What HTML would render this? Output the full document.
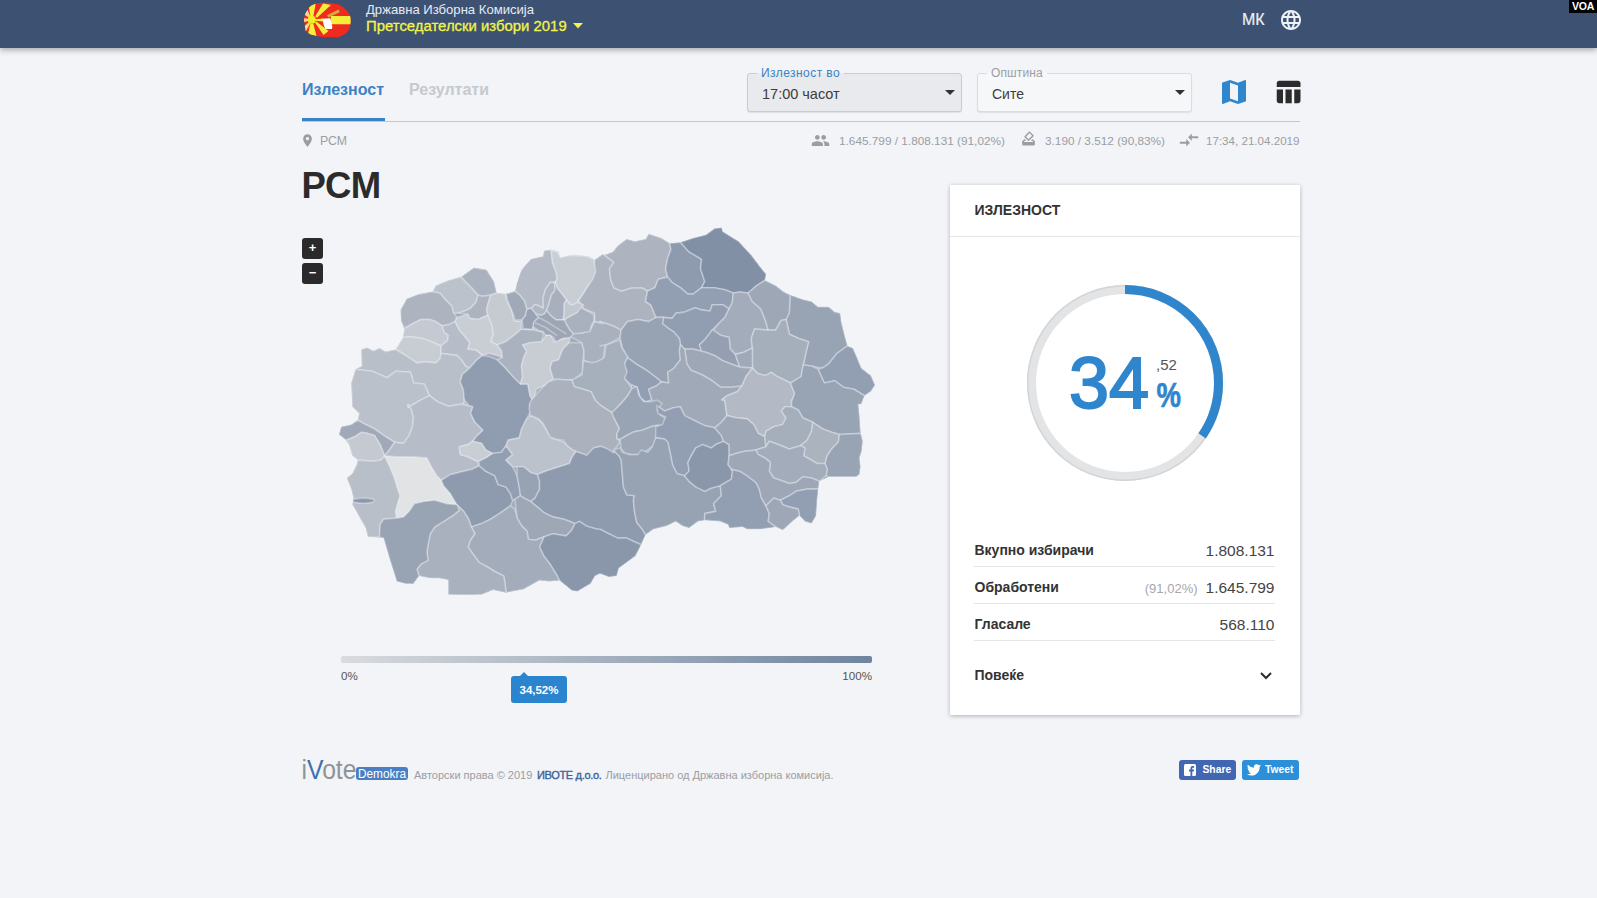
<!DOCTYPE html>
<html lang="mk">
<head>
<meta charset="utf-8">
<title>Државна Изборна Комисија</title>
<style>
*{box-sizing:border-box;margin:0;padding:0}
html,body{width:1597px;height:898px;overflow:hidden}
body{background:#f2f4f7;font-family:"Liberation Sans",sans-serif;color:#2b2b2b;position:relative}
.abs{position:absolute;white-space:nowrap}
#hdr{position:absolute;left:0;top:0;width:1597px;height:48px;background:#3d5273;box-shadow:0 2px 6px rgba(0,0,0,.32)}
#voa{position:absolute;right:0;top:0;width:28px;height:12.5px;background:#000;color:#fff;font-weight:bold;font-size:10.5px;line-height:12.5px;text-align:center;letter-spacing:-.2px}
.t1{left:366px;top:1.5px;color:#e6ebf2;font-size:13.1px;line-height:16px}
.t2{left:366px;top:17px;color:#f2f24a;font-size:14.9px;line-height:18px;-webkit-text-stroke:.3px #f2f24a}
.mk{left:1242px;top:10.8px;color:#eef1f6;font-size:16px;line-height:18px;-webkit-text-stroke:.2px #eef1f6}
.tab1{left:302px;top:81px;color:#3b82c4;font-weight:bold;font-size:16px;line-height:18px}
.tab2{left:409px;top:81px;color:#c5c9ce;font-weight:bold;font-size:16px;line-height:18px}
#tabline{position:absolute;left:302px;top:121px;width:998px;height:1px;background:#c4c8cc}
#tabul{position:absolute;left:302px;top:118px;width:83px;height:3px;background:#3b82c4}
.sel{position:absolute;top:73px;width:215px;height:38.5px;border:1px solid #c9ccd0;border-radius:3px;box-shadow:0 1px 1px rgba(0,0,0,.08)}
.sel .lab{position:absolute;left:9px;top:-8px;padding:0 4px;font-size:12px;line-height:14px;white-space:nowrap}
.sel .val{position:absolute;left:14px;top:11px;font-size:14.5px;line-height:18px;color:#3c3c3c;white-space:nowrap}
.sel .car{position:absolute;right:6px;top:16px;width:0;height:0;border-left:5px solid transparent;border-right:5px solid transparent;border-top:5px solid #333}
.info{font-size:11.8px;line-height:14px;color:#9a9ea3;top:133.5px}
h1.abs{left:301.5px;top:166px;font-size:36.5px;line-height:40px;font-weight:bold;color:#2b2b2b}
.zb{position:absolute;left:302px;width:21px;height:21px;background:#2a2a2a;border-radius:3px;color:#fff;font-weight:bold;font-size:13px;line-height:20px;text-align:center}
#bar{position:absolute;left:341px;top:656px;width:531px;height:7px;border-radius:2px;background:linear-gradient(90deg,#d9dbde,#6f849e)}
.bl{font-size:11.6px;line-height:14px;color:#555;top:669px}
#tip{position:absolute;left:511px;top:676px;width:56px;height:27px;background:#2a84ce;border-radius:3px;color:#fff;font-size:11.5px;font-weight:bold;line-height:28px;text-align:center}
#tip:before{content:"";position:absolute;left:9px;top:-4px;border-left:4px solid transparent;border-right:4px solid transparent;border-bottom:4px solid #2a84ce}
#card{position:absolute;left:950px;top:185px;width:350px;height:530px;background:#fff;box-shadow:0 1px 4px rgba(0,0,0,.28);border-radius:1px}
#card .h{position:absolute;left:24.5px;top:15.5px;font-size:14px;line-height:18px;font-weight:bold;color:#333}
#card .hs{position:absolute;left:0;top:51px;width:350px;height:1px;background:#e4e6e9}
.row{position:absolute;left:24px;width:301px;height:37px;border-bottom:1px solid #e3e5e8}
.row b{position:absolute;left:.5px;top:12px;font-size:14px;line-height:16px;color:#333;white-space:nowrap}
.row span{position:absolute;right:.5px;top:12px;font-size:15.5px;line-height:18px;color:#444;white-space:nowrap}
.row i{font-style:normal;font-size:13px;color:#a5a8ac;margin-right:8px}
.ft{font-size:11px;line-height:13px;color:#9a9ea3;top:769px}
.sb{position:absolute;top:760px;height:19.5px;width:57.5px;border-radius:3px;color:#fff;font-weight:bold;font-size:10.3px;line-height:19.5px;white-space:nowrap}
</style>
</head>
<body>
<div id="hdr">
  <svg class="abs" style="left:300px;top:0" width="56" height="44" viewBox="0 0 56 44">
<defs><clipPath id="lg"><path d="M4 20C4 16 5.500 12 9 7.500 12 4.500 16 3.200 21 2.800 27 2.600 33 3 39 4.500 44 7 47.500 11 50 15 51 19 51 24 49.500 29 47 33 42 36.500 37 37.500 31 36.500 26 37.500 20 36.800 14 35.500 8.500 34.500 5.500 30.500 4 25Z"/></clipPath></defs>
<g clip-path="url(#lg)"><rect width="56" height="44" fill="#ef2a1e"/>
<g fill="#f6ee3a"><path d="M10.500 17 13.200 17 15.800 3 8.300 4Z"/><path d="M15.300 16.200 17 17.800 31 5 23 3.500Z"/><path d="M15 19.200 15 20.800 23 21.600 23 18.400Z"/><path d="M31 16 52 16 52 24.200 31 24.200Z"/><path d="M15 22.600 16.400 21.600 28.500 31 23.500 35Z"/><path d="M10.400 23.500 13.300 23.500 16.500 36 7.800 35Z"/></g>
<g fill="#f8d98a"><path d="M9 22 10.200 23.600 5.500 32 3 27.500Z"/><path d="M8.200 18.800 8.200 21 3 22.500 3 18Z"/><path d="M9 17.600 10.300 16.200 7.500 10 4 14.500Z"/></g>
<circle cx="11.800" cy="19.800" r="4" fill="#f3ef1f"/>
<path d="M27 15.300 38.500 9.500 39.800 12.200 28.500 17.600Z" fill="#cfcb3c" opacity=".8"/>
<path d="M22.300 18.700 30.300 18.200 32.400 26.700 31.900 28.900 25.500 29.100 23.900 25.700Z" fill="#fff"/></g></svg>
  <div class="abs t1">Државна Изборна Комисија</div>
  <div class="abs t2">Претседателски избори 2019</div>
  <svg class="abs" style="left:573px;top:23px" width="10" height="6"><path d="M0 0h10L5 5.5z" fill="#f2f24a"/></svg>
  <div class="abs mk">МК</div>
  <svg class="abs" style="left:1279px;top:7.5px" width="24" height="24" viewBox="0 0 24 24"><path fill="#eef1f6" d="M11.99 2C6.47 2 2 6.48 2 12s4.47 10 9.99 10C17.52 22 22 17.52 22 12S17.52 2 11.99 2zm6.93 6h-2.95c-.32-1.25-.78-2.45-1.38-3.56 1.84.63 3.37 1.91 4.33 3.56zM12 4.04c.83 1.2 1.48 2.53 1.91 3.96h-3.82c.43-1.43 1.08-2.76 1.91-3.96zM4.26 14C4.1 13.36 4 12.69 4 12s.1-1.36.26-2h3.38c-.08.66-.14 1.32-.14 2 0 .68.06 1.34.14 2H4.26zm.82 2h2.95c.32 1.25.78 2.45 1.38 3.56-1.84-.63-3.37-1.9-4.33-3.56zm2.95-8H5.08c.96-1.66 2.49-2.93 4.33-3.56C8.81 5.55 8.35 6.750 8.030 8zM12 19.96c-.83-1.2-1.48-2.53-1.91-3.96h3.82c-.43 1.43-1.08 2.76-1.91 3.96zM14.34 14H9.66c-.09-.66-.16-1.32-.16-2 0-.68.07-1.35.16-2h4.68c.09.65.16 1.32.16 2 0 .68-.07 1.34-.16 2zm.25 5.56c.6-1.11 1.06-2.31 1.38-3.56h2.95c-.96 1.65-2.49 2.93-4.33 3.56zM16.36 14c.08-.66.14-1.32.14-2 0-.68-.06-1.34-.14-2h3.38c.16.64.26 1.31.26 2s-.1 1.36-.26 2h-3.38z"/></svg>
</div>
<div id="voa">VOA</div>

<div class="abs tab1">Излезност</div>
<div class="abs tab2">Резултати</div>
<div id="tabline"></div><div id="tabul"></div>

<div class="sel" style="left:747px;background:#e8eaed">
  <div class="lab" style="letter-spacing:.43px;color:#3b82c4;background:linear-gradient(#f2f4f7 50%,#e8eaed 50%)">Излезност во</div>
  <div class="val">17:00 часот</div><div class="car"></div>
</div>
<div class="sel" style="left:977px;background:#f6f7f9;border-color:#d9dce0">
  <div class="lab" style="letter-spacing:.13px;color:#9a9ea3;background:linear-gradient(#f2f4f7 50%,#f7f8fa 50%)">Општина</div>
  <div class="val" style="font-size:14px">Сите</div><div class="car"></div>
</div>
<svg class="abs" style="left:1218px;top:76px" width="32" height="32" viewBox="0 0 24 24"><path fill="#2f86cd" d="M20.500 3l-.16.030L15 5.100 9 3 3.360 4.900c-.21.070-.36.250-.36.480V20.500c0 .28.220.5.500.5l.16-.030L9 18.900l6 2.100 5.640-1.900c.21-.070.36-.250.36-.480V3.500c0-.28-.22-.5-.5-.5zM15 19l-6-2.110V5l6 2.110V19z"/></svg>
<svg class="abs" style="left:1273px;top:77px" width="30" height="30" viewBox="0 0 24 24"><path fill="#2b2b2b" d="M10 10.020h5V21h-5zM17 21h3c1.100 0 2-.9 2-2v-9h-5v11zm3-18H5c-1.100 0-2 .9-2 2v3h19V5c0-1.100-.9-2-2-2zM3 19c0 1.100.9 2 2 2h3V10H3v9z"/></svg>
<svg class="abs" style="left:299.5px;top:132.5px" width="15" height="15" viewBox="0 0 24 24"><path fill="#9a9ea3" d="M12 2C8.130 2 5 5.130 5 9c0 5.250 7 13 7 13s7-7.750 7-13c0-3.870-3.130-7-7-7zm0 9.500c-1.380 0-2.500-1.120-2.500-2.500s1.120-2.500 2.500-2.500 2.500 1.120 2.500 2.500-1.120 2.500-2.500 2.500z"/></svg>
<svg class="abs" style="left:811px;top:131px" width="19" height="19" viewBox="0 0 24 24"><path fill="#9a9ea3" d="M16 11c1.660 0 2.990-1.340 2.990-3S17.660 5 16 5c-1.660 0-3 1.340-3 3s1.340 3 3 3zm-8 0c1.660 0 2.990-1.340 2.990-3S9.660 5 8 5C6.340 5 5 6.340 5 8s1.340 3 3 3zm0 2c-2.330 0-7 1.170-7 3.500V19h14v-2.500c0-2.330-4.670-3.500-7-3.500zm8 0c-.29 0-.62.020-.97.050 1.160.84 1.970 1.970 1.970 3.450V19h6v-2.500c0-2.330-4.670-3.500-7-3.500z"/></svg>
<svg class="abs" style="left:1020px;top:130px" width="17" height="17" viewBox="0 0 24 24"><path fill="#9a9ea3" d="M18 13h-.68l-2 2h1.910L19 17H5l1.780-2h2.050l-2-2H6l-3 3v4c0 1.100.89 2 1.990 2H19c1.100 0 2-.89 2-2v-4l-3-3zm-1-5.050l-4.950 4.950-3.540-3.540 4.950-4.950L17 7.950zm-4.240-5.660L6.390 8.660c-.39.390-.39 1.020 0 1.410l4.950 4.950c.39.390 1.020.39 1.410 0l6.360-6.360c.39-.39.39-1.020 0-1.410L14.160 2.300c-.38-.4-1.010-.4-1.400-.010z"/></svg>
<svg class="abs" style="left:1178px;top:129px" width="22" height="22" viewBox="0 0 24 24"><path fill="#9a9ea3" d="M9.010 14H2v2h7.010v3L13 15l-3.990-4v3zm5.980-1v-3H22V8h-7.010V5L11 9l3.990 4z"/></svg>

<div class="abs info" style="left:320px;font-size:12.3px">РСМ</div>
<div class="abs info" style="left:839px">1.645.799 / 1.808.131 (91,02%)</div>
<div class="abs info" style="left:1045px">3.190 / 3.512 (90,83%)</div>
<div class="abs info" style="left:1206px;font-size:11.6px">17:34, 21.04.2019</div>

<h1 class="abs">РСМ</h1>
<div class="zb" style="top:238px">+</div>
<div class="zb" style="top:263px">−</div>

<svg class="abs" style="left:330px;top:215px" width="560" height="395" viewBox="0 0 560 395"><defs><clipPath id="mk"><path d="M21.2 168.0L25.4 154.2L31.7 151.0L31.3 134.5L37.0 132.4L43.4 135.8L49.7 133.0L55.4 136.6L65.6 134.5L73.0 122.5L74.1 114.0L70.9 105.5L70.5 94.9L76.6 83.7L88.9 79.1L102.6 76.5L105.8 70.6L118.5 65.3L131.2 61.7L143.9 52.6L156.6 54.7L164.0 66.4L166.8 78.0L175.7 78.7L185.2 75.9L187.3 67.4L191.5 54.7L201.1 44.2L212.7 41.4L214.2 35.7L221.2 34.6L228.6 36.7L230.3 43.1L241.3 39.9L258.2 41.0L264.6 44.8L273.0 38.9L274.2 39.9L282.7 36.7L288.0 30.4L296.5 24.0L304.9 26.2L315.5 24.0L318.7 18.8L331.4 23.0L339.8 28.3L350.4 27.2L363.1 23.0L375.8 19.8L384.3 13.5L391.7 12.4L392.8 16.6L408.6 26.2L421.3 39.9L430.8 52.6L436.1 59.0L435.1 65.3L445.7 70.6L454.1 77.0L460.5 80.1L473.2 84.4L481.6 86.5L488.0 91.8L498.6 91.8L504.9 97.1L510.2 98.1L511.3 106.6L514.4 119.3L517.6 130.9L522.9 133.0L527.1 142.6L531.4 153.1L540.9 160.6L545.1 170.1L540.9 176.4L534.6 180.7L531.4 189.1L528.4 189.5L529.5 200.6L530.6 216.2L532.8 226.2L531.7 236.2L529.5 242.9L530.6 251.8L529.5 259.6L526.2 261.8L499.4 261.8L489.4 266.3L488.3 274.1L487.2 285.2L486.1 300.8L481.6 308.6L474.9 306.4L469.4 300.8L463.8 305.3L452.7 315.3L446.0 312.0L430.4 314.2L417.0 314.2L412.6 312.0L399.2 313.1L398.1 309.7L390.3 306.4L374.7 305.3L368.0 306.4L359.1 313.1L352.4 310.9L345.7 306.4L336.8 310.9L323.5 314.2L315.7 319.8L311.2 329.8L305.6 340.9L296.7 347.6L288.9 353.2L286.7 361.0L278.9 362.1L270.0 358.7L265.1 361.0L260.6 368.8L247.3 376.6L241.7 375.5L229.4 365.4L219.4 366.5L209.4 365.4L193.8 374.3L176.0 377.7L163.1 375.0L151.9 379.5L135.9 379.9L118.3 379.5L118.3 365.0L109.1 363.2L100.2 363.2L89.1 361.0L83.5 368.8L75.7 368.8L66.8 366.5L60.1 345.4L53.5 323.1L37.9 322.0L35.6 313.1L31.2 305.3L25.6 295.3L22.3 289.7L23.4 283.0L21.2 274.1L16.7 263.0L22.3 258.5L26.7 249.6L27.8 245.1L22.3 240.7L18.9 229.6L14.5 224.0L8.9 219.5L11.1 211.7L21.2 209.5L27.8 205.0L29.0 198.4L22.3 191.7Z"/></clipPath></defs><g clip-path="url(#mk)" stroke="#f4f7fb" stroke-opacity=".36" stroke-width="1.6" stroke-linejoin="round"><path d="M21.2 168.0L25.4 154.2L31.7 151.0L31.3 134.5L37.0 132.4L43.4 135.8L49.7 133.0L55.4 136.6L65.6 134.5L73.0 122.5L74.1 114.0L70.9 105.5L70.5 94.9L76.6 83.7L88.9 79.1L102.6 76.5L105.8 70.6L118.5 65.3L131.2 61.7L143.9 52.6L156.6 54.7L164.0 66.4L166.8 78.0L175.7 78.7L185.2 75.9L187.3 67.4L191.5 54.7L201.1 44.2L212.7 41.4L214.2 35.7L221.2 34.6L228.6 36.7L230.3 43.1L241.3 39.9L258.2 41.0L264.6 44.8L273.0 38.9L274.2 39.9L282.7 36.7L288.0 30.4L296.5 24.0L304.9 26.2L315.5 24.0L318.7 18.8L331.4 23.0L339.8 28.3L350.4 27.2L363.1 23.0L375.8 19.8L384.3 13.5L391.7 12.4L392.8 16.6L408.6 26.2L421.3 39.9L430.8 52.6L436.1 59.0L435.1 65.3L445.7 70.6L454.1 77.0L460.5 80.1L473.2 84.4L481.6 86.5L488.0 91.8L498.6 91.8L504.9 97.1L510.2 98.1L511.3 106.6L514.4 119.3L517.6 130.9L522.9 133.0L527.1 142.6L531.4 153.1L540.9 160.6L545.1 170.1L540.9 176.4L534.6 180.7L531.4 189.1L528.4 189.5L529.5 200.6L530.6 216.2L532.8 226.2L531.7 236.2L529.5 242.9L530.6 251.8L529.5 259.6L526.2 261.8L499.4 261.8L489.4 266.3L488.3 274.1L487.2 285.2L486.1 300.8L481.6 308.6L474.9 306.4L469.4 300.8L463.8 305.3L452.7 315.3L446.0 312.0L430.4 314.2L417.0 314.2L412.6 312.0L399.2 313.1L398.1 309.7L390.3 306.4L374.7 305.3L368.0 306.4L359.1 313.1L352.4 310.9L345.7 306.4L336.8 310.9L323.5 314.2L315.7 319.8L311.2 329.8L305.6 340.9L296.7 347.6L288.9 353.2L286.7 361.0L278.9 362.1L270.0 358.7L265.1 361.0L260.6 368.8L247.3 376.6L241.7 375.5L229.4 365.4L219.4 366.5L209.4 365.4L193.8 374.3L176.0 377.7L163.1 375.0L151.9 379.5L135.9 379.9L118.3 379.5L118.3 365.0L109.1 363.2L100.2 363.2L89.1 361.0L83.5 368.8L75.7 368.8L66.8 366.5L60.1 345.4L53.5 323.1L37.9 322.0L35.6 313.1L31.2 305.3L25.6 295.3L22.3 289.7L23.4 283.0L21.2 274.1L16.7 263.0L22.3 258.5L26.7 249.6L27.8 245.1L22.3 240.7L18.9 229.6L14.5 224.0L8.9 219.5L11.1 211.7L21.2 209.5L27.8 205.0L29.0 198.4L22.3 191.7Z" fill="#a3acba" stroke="none"/><path d="M76.6 83.7L88.9 79.1L102.6 76.5L110.1 78.0L115.3 84.4L121.7 90.7L123.8 98.1L127.0 102.4L124.9 106.6L118.5 109.8L112.2 110.8L105.8 106.6L99.5 104.5L91.0 104.5L82.5 108.7L74.1 112.9L70.9 105.5L70.5 94.9Z" fill="#adb4c0"/><path d="M102.6 76.5L105.8 70.6L118.5 65.3L131.2 61.7L135.4 66.4L141.8 72.7L148.1 80.1L146.0 87.5L139.7 93.9L129.1 98.1L123.8 98.1L121.7 90.7L115.3 84.4L110.1 78.0Z" fill="#bcc2cc"/><path d="M131.2 61.7L143.9 52.6L156.6 54.7L164.0 66.4L166.8 78.0L160.8 80.1L152.4 81.2L148.1 80.1L141.8 72.7L135.4 66.4Z" fill="#aab2bf"/><path d="M148.1 80.1L152.4 81.2L160.8 80.1L158.7 86.5L156.6 93.9L157.7 100.2L148.1 104.5L139.7 103.4L137.6 99.2L129.1 98.1L139.7 93.9L146.0 87.5Z" fill="#adb4c0"/><path d="M160.8 80.1L166.8 78.0L175.7 78.7L176.7 85.4L182.0 96.0L184.1 105.5L191.5 106.6L191.5 114.0L184.1 120.3L175.7 126.7L167.2 129.9L160.8 126.7L163.0 119.3L161.9 110.8L157.7 100.2L156.6 93.9L158.7 86.5Z" fill="#c6cbd2"/><path d="M127.0 102.4L137.6 99.2L139.7 103.4L148.1 104.5L157.7 100.2L161.9 110.8L163.0 119.3L160.8 126.7L167.2 129.9L171.4 135.2L172.5 142.6L167.2 140.4L158.7 138.3L152.4 140.4L146.0 135.2L137.6 134.1L139.7 127.8L135.4 122.5L129.1 115.1L125.9 108.7L124.9 106.6Z" fill="#c9ced5"/><path d="M73.0 122.5L74.1 114.0L82.5 108.7L91.0 104.5L99.5 104.5L105.8 106.6L112.2 110.8L114.3 117.2L118.5 120.3L117.5 125.6L111.1 130.9L101.6 126.7L91.0 123.1L80.4 121.8Z" fill="#c5cad2"/><path d="M65.6 134.5L73.0 122.5L80.4 121.8L91.0 123.1L101.6 126.7L111.1 130.9L111.1 138.3L110.1 143.6L105.8 147.9L95.2 146.8L86.8 147.9L80.4 143.6L72.0 138.3Z" fill="#c8ccd3"/><path d="M112.2 110.8L118.5 109.8L124.9 106.6L125.9 108.7L129.1 115.1L135.4 122.5L139.7 127.8L137.6 134.1L146.0 135.2L152.4 140.4L146.0 145.7L139.7 153.1L135.4 151.0L131.2 144.7L127.0 140.4L118.5 139.4L111.1 138.3L111.1 130.9L117.5 125.6L118.5 120.3L114.3 117.2Z" fill="#b6bdc8"/><path d="M31.7 151.0L31.3 134.5L37.0 132.4L43.4 135.8L49.7 133.0L55.4 136.6L65.6 134.5L72.0 138.3L80.4 143.6L86.8 147.9L95.2 146.8L105.8 147.9L110.1 143.6L111.1 138.3L118.5 139.4L127.0 140.4L131.2 144.7L135.4 151.0L139.7 153.1L132.3 159.5L130.2 166.9L133.3 174.3L134.4 184.9L139.7 191.2L131.2 189.1L118.5 191.2L107.9 187.0L99.5 180.7L94.2 169.0L83.6 168.0L80.4 157.0L65.6 156.3L57.1 162.7L42.3 156.3L25.4 154.2Z" fill="#b9bfc9"/><path d="M21.2 168.0L25.4 154.2L42.3 156.3L57.1 162.7L65.6 156.3L80.4 157.0L83.6 168.0L94.2 169.0L99.5 180.7L91.0 184.9L78.3 192.3L78.0 189.5L81.3 193.9L83.5 202.8L82.4 211.7L79.1 220.6L73.5 228.4L64.6 227.3L55.7 221.8L44.6 214.0L33.4 208.4L27.8 205.0L29.0 198.4L22.3 191.7Z" fill="#bbc1ca"/><path d="M139.7 153.1L146.0 145.7L152.4 140.4L158.7 141.5L167.2 144.7L175.7 153.1L184.1 162.7L190.5 169.0L197.9 169.0L200.0 180.7L203.2 186.0L199.4 189.5L200.5 196.1L196.0 205.0L191.6 214.0L189.3 222.9L178.2 225.1L176.0 230.7L171.5 237.3L162.6 238.5L155.9 235.1L151.5 228.4L142.6 226.2L145.9 221.8L152.6 215.1L144.8 207.3L140.3 198.4L142.6 191.7L133.7 189.5L134.4 184.9L133.3 174.3L130.2 166.9L132.3 159.5Z" fill="#909cb0"/><path d="M191.5 114.0L203.2 115.1L213.8 117.2L211.6 126.7L200.0 127.8L192.6 129.9L196.8 136.2L193.7 142.6L191.5 151.0L192.6 161.6L190.5 169.0L184.1 162.7L175.7 153.1L167.2 144.7L172.5 142.6L171.4 135.2L167.2 129.9L175.7 126.7L184.1 120.3Z" fill="#aab2bf"/><path d="M192.6 129.9L200.0 127.8L211.6 126.7L215.9 120.3L221.2 120.3L224.3 126.7L232.8 123.5L240.2 121.4L239.2 127.8L232.8 134.1L228.6 144.7L222.2 146.8L220.1 153.1L223.3 163.7L215.9 170.1L206.3 174.3L203.2 186.0L200.0 180.7L197.9 169.0L190.5 169.0L192.6 161.6L191.5 151.0L193.7 142.6L196.8 136.2Z" fill="#c8ccd3"/><path d="M232.8 134.1L239.2 127.8L251.9 127.8L254.0 136.2L252.9 146.8L252.9 157.4L243.4 164.8L232.8 164.8L223.3 163.7L220.1 153.1L222.2 146.8L228.6 144.7Z" fill="#a9b1be"/><path d="M185.2 75.9L187.3 67.4L191.5 54.7L201.1 44.2L212.7 41.4L214.2 35.7L221.2 34.6L222.2 45.2L227.5 55.8L227.5 63.2L220.1 68.5L213.8 77.0L211.6 89.7L203.2 91.8L197.9 93.9L194.7 85.4L188.4 78.0Z" fill="#b4bbc6"/><path d="M221.2 34.6L228.6 36.7L230.3 43.1L241.3 39.9L258.2 41.0L264.6 44.8L263.5 55.8L259.3 68.5L254.0 77.0L248.7 85.4L243.4 92.8L239.2 89.7L232.8 78.0L224.3 68.5L227.5 63.2L227.5 55.8L222.2 45.2Z" fill="#c8cdd4"/><path d="M175.7 78.7L185.2 75.9L188.4 78.0L194.7 85.4L197.9 93.9L195.8 100.2L191.5 106.6L184.1 105.5L182.0 96.0L176.7 85.4Z" fill="#a0a9b8"/><path d="M213.8 77.0L220.1 68.5L224.3 68.5L232.8 78.0L234.9 91.8L232.8 104.5L224.3 106.6L218.0 100.2L211.6 89.7Z" fill="#a3acba"/><path d="M191.5 106.6L195.8 100.2L197.9 93.9L203.2 91.8L211.6 99.2L208.5 104.5L203.2 108.7L204.2 114.0L191.5 114.0Z" fill="#9aa4b4"/><path d="M203.2 108.7L208.5 104.5L211.6 99.2L218.0 100.2L224.3 106.6L232.8 104.5L239.2 110.8L243.4 117.2L240.2 121.4L232.8 123.5L224.3 126.7L221.2 120.3L215.9 120.3L213.8 117.2L204.2 114.0Z" fill="#a0a9b8"/><path d="M234.9 91.8L239.2 89.7L243.4 92.8L252.9 88.6L248.7 85.4L243.4 92.8L234.9 104.5L232.8 104.5Z" fill="#c0c5ce"/><path d="M234.9 104.5L243.4 92.8L252.9 88.6L254.0 93.9L264.6 98.1L264.6 106.6L260.3 115.1L251.9 118.2L243.4 117.2L239.2 110.8Z" fill="#a3acba"/><path d="M264.6 44.8L273.0 38.9L274.2 39.9L278.5 43.1L283.8 47.3L279.5 53.7L280.6 64.3L283.8 72.7L291.2 75.9L301.7 72.7L312.3 72.7L317.6 75.9L315.5 86.5L320.8 89.7L326.1 102.4L318.7 106.6L308.1 104.5L297.5 106.6L291.2 115.1L282.7 110.8L270.0 106.6L273.0 108.7L264.6 106.6L264.6 98.1L254.0 93.9L248.7 85.4L254.0 77.0L259.3 68.5L263.5 55.8Z" fill="#adb4c0"/><path d="M264.6 106.6L273.0 108.7L270.0 106.6L282.7 110.8L291.2 115.1L290.1 122.5L284.8 125.6L276.3 129.9L270.0 130.9L275.1 129.9L273.0 144.7L262.4 148.9L254.0 145.7L254.0 136.2L251.9 127.8L240.2 121.4L243.4 117.2L251.9 118.2L260.3 115.1Z" fill="#a9b1be"/><path d="M274.2 39.9L282.7 36.7L288.0 30.4L296.5 24.0L304.9 26.2L315.5 24.0L318.7 18.8L331.4 23.0L339.8 28.3L340.9 34.6L337.7 43.1L335.6 53.7L337.7 62.1L328.2 64.3L325.0 72.7L317.6 75.9L312.3 72.7L301.7 72.7L291.2 75.9L283.8 72.7L280.6 64.3L279.5 53.7L283.8 47.3L278.5 43.1Z" fill="#adb4c0"/><path d="M339.8 28.3L350.4 27.2L358.9 36.7L371.6 44.2L370.5 53.7L374.8 66.4L371.6 72.7L363.1 79.1L357.8 79.1L350.4 72.7L342.0 67.4L337.7 62.1L335.6 53.7L337.7 43.1L340.9 34.6Z" fill="#8e9aae"/><path d="M350.4 27.2L363.1 23.0L375.8 19.8L384.3 13.5L391.7 12.4L392.8 16.6L408.6 26.2L421.3 39.9L430.8 52.6L436.1 59.0L435.1 65.3L426.6 70.6L418.1 78.0L409.7 77.0L403.3 78.0L394.9 74.8L384.3 72.7L374.8 72.7L371.6 72.7L374.8 66.4L370.5 53.7L371.6 44.2L358.9 36.7Z" fill="#8290a6"/><path d="M328.2 64.3L337.7 62.1L342.0 67.4L350.4 72.7L357.8 79.1L363.1 79.1L371.6 72.7L384.3 72.7L394.9 74.8L403.3 78.0L402.3 87.5L399.1 93.9L392.8 89.7L382.2 89.7L380.1 96.0L371.6 94.9L365.2 92.8L354.7 97.1L346.2 98.1L342.0 103.4L333.5 102.4L326.1 102.4L320.8 89.7L315.5 86.5L317.6 75.9L325.0 72.7Z" fill="#929eb1"/><path d="M333.5 102.4L342.0 103.4L346.2 98.1L354.7 97.1L365.2 92.8L371.6 94.9L380.1 96.0L382.2 89.7L392.8 89.7L399.1 93.9L394.9 102.4L388.5 108.7L382.2 115.1L375.8 123.5L369.5 129.9L371.6 136.2L363.1 134.1L354.7 134.1L350.4 129.9L349.4 123.5L344.1 117.2L337.7 112.9L332.4 108.7Z" fill="#919db0"/><path d="M291.2 115.1L297.5 106.6L308.1 104.5L318.7 106.6L326.1 102.4L333.5 102.4L332.4 108.7L337.7 112.9L344.1 117.2L349.4 123.5L350.4 129.9L349.4 136.2L350.4 144.7L344.1 153.1L337.7 157.4L338.8 168.0L331.4 166.9L325.0 161.6L316.6 155.3L306.0 148.9L297.5 142.6L292.2 132.0L290.1 122.5Z" fill="#97a2b3"/><path d="M297.5 142.6L306.0 148.9L316.6 155.3L325.0 161.6L331.4 166.9L326.1 171.1L318.7 174.3L321.9 184.9L315.5 187.0L310.2 182.8L307.0 172.2L301.7 170.1L294.3 163.7L296.5 155.3L293.3 151.0Z" fill="#929eb1"/><path d="M403.3 78.0L409.7 77.0L418.1 78.0L422.4 86.5L430.8 93.9L435.1 104.5L438.3 115.1L424.5 114.0L421.3 123.5L422.4 133.0L413.9 137.3L405.4 139.4L400.2 134.1L399.1 122.5L390.6 120.3L383.2 115.1L388.5 108.7L394.9 102.4L399.1 93.9L402.3 87.5Z" fill="#a3acba"/><path d="M418.1 78.0L426.6 70.6L435.1 65.3L445.7 70.6L454.1 77.0L460.5 80.1L459.4 98.1L456.2 104.5L451.0 105.5L445.7 115.1L438.3 115.1L435.1 104.5L430.8 93.9L422.4 86.5Z" fill="#9da7b6"/><path d="M460.5 80.1L473.2 84.4L481.6 86.5L488.0 91.8L498.6 91.8L504.9 97.1L510.2 98.1L511.3 106.6L514.4 119.3L517.6 130.9L507.0 138.3L498.6 148.9L492.2 153.1L481.6 151.0L473.2 150.0L476.3 136.2L478.5 126.7L468.9 123.5L459.4 119.3L456.2 104.5L459.4 98.1Z" fill="#98a3b3"/><path d="M517.6 130.9L522.9 133.0L527.1 142.6L531.4 153.1L540.9 160.6L545.1 170.1L540.9 176.4L534.6 180.7L524.0 174.3L513.4 172.2L504.9 165.8L494.3 168.0L488.0 154.2L492.2 153.1L498.6 148.9L507.0 138.3Z" fill="#929eb1"/><path d="M424.5 114.0L438.3 115.1L445.7 115.1L451.0 105.5L456.2 104.5L459.4 119.3L468.9 123.5L478.5 126.7L476.3 136.2L473.2 150.0L471.1 161.6L460.5 168.0L452.0 163.7L445.7 160.6L441.4 157.4L435.1 160.6L427.7 158.4L422.4 153.1L422.4 133.0L421.3 123.5Z" fill="#a5aebb"/><path d="M382.2 115.1L383.2 115.1L390.6 120.3L399.1 122.5L400.2 134.1L405.4 139.4L409.7 152.1L401.2 148.9L392.8 145.7L384.3 140.4L375.8 137.3L371.6 136.2L369.5 129.9L375.8 123.5Z" fill="#949fb1"/><path d="M405.4 139.4L413.9 137.3L422.4 133.0L422.4 153.1L409.7 152.1Z" fill="#a0a9b8"/><path d="M354.7 134.1L363.1 134.1L371.6 136.2L375.8 137.3L384.3 140.4L392.8 145.7L401.2 148.9L409.7 152.1L422.4 153.1L416.0 161.6L411.8 171.1L401.2 172.2L390.6 172.2L382.2 165.8L371.6 159.5L361.0 155.3L356.8 148.9Z" fill="#9da7b6"/><path d="M350.4 129.9L354.7 134.1L356.8 148.9L361.0 155.3L371.6 159.5L382.2 165.8L390.6 172.2L401.2 172.2L411.8 171.1L407.6 176.4L397.0 180.7L391.7 184.9L394.7 185.0L397.0 200.6L391.4 207.3L384.7 212.8L374.7 210.6L365.8 206.2L354.6 200.6L350.2 191.7L343.5 192.8L334.6 196.1L326.8 190.6L317.9 188.3L310.1 192.8L301.2 189.5L292.3 191.7L286.7 198.4L292.3 185.0L291.2 191.2L298.6 180.7L301.7 170.1L307.0 172.2L310.2 182.8L315.5 187.0L321.9 184.9L318.7 174.3L326.1 171.1L331.4 166.9L338.8 168.0L337.7 157.4L344.1 153.1L350.4 144.7L349.4 136.2Z" fill="#a0a9b8"/><path d="M416.0 161.6L422.4 153.1L427.7 158.4L435.1 160.6L441.4 157.4L445.7 160.6L452.0 163.7L460.5 168.0L464.7 178.5L461.5 187.0L461.6 185.0L461.6 191.7L454.9 191.7L451.5 196.1L456.0 202.8L452.7 209.5L443.7 211.7L436.0 216.2L434.8 221.8L428.2 218.4L423.7 209.5L417.0 203.9L405.9 202.8L397.0 200.6L394.7 185.0L391.7 184.9L397.0 180.7L407.6 176.4L411.8 171.1Z" fill="#b3bac5"/><path d="M473.2 150.0L481.6 151.0L488.0 154.2L494.3 168.0L504.9 165.8L513.4 172.2L524.0 174.3L534.6 180.7L531.4 189.1L528.4 189.5L529.5 200.6L530.6 218.4L509.5 219.5L501.7 217.3L492.8 214.0L482.7 207.3L472.7 202.8L468.2 195.0L461.6 191.7L461.6 185.0L461.5 187.0L464.7 178.5L460.5 168.0L471.1 161.6Z" fill="#98a3b3"/><path d="M8.9 219.5L11.1 211.7L21.2 209.5L27.8 205.0L33.4 208.4L44.6 214.0L55.7 221.8L64.6 227.3L60.1 234.0L54.6 240.7L50.1 229.6L44.6 220.6L37.9 218.4L31.2 217.3L24.5 221.8L16.7 225.1L14.5 224.0Z" fill="#a0a9b8"/><path d="M16.7 225.1L24.5 221.8L31.2 217.3L37.9 218.4L44.6 220.6L50.1 229.6L54.6 240.7L51.2 245.1L42.3 246.3L27.8 245.1L22.3 240.7L18.9 229.6Z" fill="#c5cad2"/><path d="M27.8 245.1L42.3 246.3L51.2 245.1L54.6 240.7L60.1 251.8L64.6 263.0L67.9 274.1L70.2 280.8L66.8 291.9L65.7 296.4L66.8 303.1L53.5 304.2L50.1 309.7L49.5 322.0L37.9 322.0L35.6 313.1L31.2 305.3L25.6 295.3L22.3 289.7L23.4 283.0L21.2 274.1L16.7 263.0L22.3 258.5L26.7 249.6Z" fill="#b9bfc9"/><path d="M54.6 240.7L66.8 241.8L82.4 241.8L96.9 242.9L101.4 251.8L106.9 260.7L111.4 265.2L113.6 270.8L120.3 278.6L127.0 289.7L115.8 288.6L104.7 285.2L93.6 286.4L84.6 288.6L79.1 296.4L73.5 301.9L66.8 303.1L65.7 296.4L66.8 291.9L70.2 280.8L67.9 274.1L64.6 263.0L60.1 251.8Z" fill="#e2e3e4"/><path d="M99.5 180.7L107.9 187.0L118.5 191.2L131.2 189.1L139.7 191.2L134.4 184.9L133.7 189.5L142.6 191.7L140.3 198.4L144.8 207.3L152.6 215.1L145.9 221.8L142.6 226.2L138.1 229.6L129.2 231.8L130.3 239.6L138.1 241.8L147.0 246.3L149.2 250.7L142.6 254.1L133.7 256.3L120.3 259.6L111.4 265.2L106.9 260.7L101.4 251.8L96.9 242.9L82.4 241.8L66.8 241.8L54.6 240.7L60.1 234.0L64.6 227.3L73.5 228.4L79.1 220.6L82.4 211.7L83.5 202.8L81.3 193.9L78.0 189.5L78.3 192.3L91.0 184.9Z" fill="#b6bdc8"/><path d="M129.2 231.8L138.1 229.6L142.6 226.2L151.5 228.4L155.9 235.1L162.6 238.5L155.9 242.9L149.2 246.3L147.0 246.3L138.1 241.8L130.3 239.6Z" fill="#c9ced5"/><path d="M111.4 265.2L120.3 259.6L133.7 256.3L142.6 254.1L149.2 250.7L155.9 256.3L164.8 260.7L168.2 269.6L176.0 271.9L180.4 278.6L182.7 285.2L180.4 290.8L169.3 298.6L160.4 304.2L151.5 308.6L141.4 312.0L138.1 303.1L133.7 296.4L127.0 289.7L120.3 278.6L113.6 270.8Z" fill="#8e9aae"/><path d="M149.2 246.3L155.9 242.9L162.6 238.5L171.5 237.3L176.0 230.7L182.7 239.6L176.0 245.1L182.7 251.8L187.1 260.7L189.3 271.9L190.5 280.8L184.9 284.1L182.7 285.2L180.4 278.6L176.0 271.9L168.2 269.6L164.8 260.7L155.9 256.3L149.2 250.7Z" fill="#929eb1"/><path d="M178.2 225.1L189.3 222.9L191.6 214.0L196.0 205.0L200.5 200.6L209.4 205.0L216.1 214.0L221.6 222.9L231.7 226.2L239.5 231.8L246.1 236.2L241.7 242.9L239.5 248.5L229.4 251.8L218.3 255.2L207.2 259.6L200.5 257.4L193.8 251.8L187.1 251.8L182.7 251.8L176.0 245.1L182.7 239.6L176.0 230.7Z" fill="#bcc2cc"/><path d="M207.2 259.6L218.3 255.2L229.4 251.8L239.5 248.5L241.7 242.9L246.1 236.2L256.2 239.6L262.8 232.9L271.8 230.7L270.0 230.7L283.4 235.1L288.9 240.7L291.2 245.1L292.3 258.5L293.4 271.9L296.7 279.7L304.5 280.8L303.4 285.2L304.5 296.4L306.8 307.5L312.3 314.2L315.7 319.8L311.2 329.8L301.2 325.3L296.7 323.1L287.8 323.1L278.9 318.7L270.0 314.2L267.3 314.2L256.2 310.9L249.5 306.4L245.0 308.6L233.9 304.2L222.8 301.9L213.8 297.5L207.2 291.9L200.5 286.4L204.9 283.0L209.4 274.1L209.4 266.3Z" fill="#8e9aae"/><path d="M187.1 251.8L193.8 251.8L200.5 257.4L207.2 259.6L209.4 266.3L209.4 274.1L204.9 283.0L200.5 286.4L193.8 283.0L190.5 280.8L189.3 271.9L187.1 260.7Z" fill="#97a2b3"/><path d="M190.5 280.8L193.8 283.0L200.5 286.4L207.2 291.9L213.8 297.5L222.8 301.9L233.9 304.2L245.0 308.6L241.7 315.3L236.1 320.9L222.8 318.7L213.8 322.0L204.9 325.3L198.2 324.2L197.1 316.4L191.6 310.9L187.1 303.1L186.0 294.1L184.9 284.1Z" fill="#9da7b6"/><path d="M245.0 308.6L249.5 306.4L256.2 310.9L267.3 314.2L270.0 314.2L278.9 318.7L287.8 323.1L296.7 323.1L301.2 325.3L311.2 329.8L305.6 340.9L296.7 347.6L288.9 353.2L286.7 361.0L278.9 362.1L270.0 358.7L265.1 361.0L260.6 368.8L247.3 376.6L241.7 375.5L229.4 365.4L227.2 361.0L220.5 349.8L213.8 340.9L209.4 332.0L213.8 322.0L222.8 318.7L236.1 320.9L241.7 315.3Z" fill="#8a97ab"/><path d="M141.4 312.0L151.5 308.6L160.4 304.2L169.3 298.6L180.4 290.8L184.9 294.1L187.1 303.1L191.6 310.9L197.1 316.4L198.2 324.2L204.9 325.3L213.8 322.0L209.4 332.0L213.8 340.9L220.5 349.8L227.2 361.0L229.4 365.4L219.4 366.5L209.4 365.4L193.8 374.3L176.0 377.7L174.9 367.7L173.7 361.0L164.8 356.5L155.9 351.0L149.2 347.6L142.6 338.7L138.1 332.0L140.3 325.3L144.8 318.7Z" fill="#a3acba"/><path d="M127.0 289.7L133.7 296.4L138.1 303.1L141.4 312.0L144.8 318.7L140.3 325.3L138.1 332.0L142.6 338.7L149.2 347.6L155.9 351.0L164.8 356.5L173.7 361.0L174.9 367.7L176.0 377.7L163.1 375.0L151.9 379.5L135.9 379.9L118.3 379.5L118.3 365.0L109.1 363.2L100.2 363.2L89.1 361.0L86.9 354.3L91.3 348.7L98.0 345.4L96.9 336.5L98.0 329.8L100.2 318.7L104.7 312.0L113.6 306.4L122.5 300.8L129.2 295.3Z" fill="#a9b1be"/><path d="M66.8 303.1L73.5 301.9L79.1 296.4L84.6 288.6L93.6 286.4L104.7 285.2L115.8 288.6L127.0 289.7L129.2 295.3L122.5 300.8L113.6 306.4L104.7 312.0L100.2 318.7L98.0 329.8L96.9 336.5L98.0 345.4L91.3 348.7L86.9 354.3L89.1 361.0L83.5 368.8L75.7 368.8L66.8 366.5L60.1 345.4L53.5 323.1L49.5 322.0L50.1 309.7L53.5 304.2Z" fill="#98a3b3"/><path d="M241.8 165.1L251.9 160.1L253.5 145.9L261.9 147.6L266.9 146.7L274.4 142.6L276.1 130.0L289.5 125.0L292.0 133.4L297.8 141.7L294.5 148.4L297.0 156.8L294.5 163.5L299.5 170.1L302.0 173.5L297.0 181.8L290.3 189.4L283.6 196.9L281.9 197.7L275.3 193.5L270.3 190.2L265.2 185.2L261.1 176.8L253.5 174.3L244.4 171.8Z" fill="#a6afbc"/><path d="M204.3 181.8L208.4 176.8L218.5 166.8L226.8 164.3L241.8 165.1L244.4 171.8L253.5 174.3L261.1 176.8L265.2 185.2L270.3 190.2L275.3 193.5L281.9 197.7L283.6 201.9L287.0 208.6L289.5 213.6L287.0 218.6L287.0 223.6L290.3 226.9L285.3 233.6L283.6 237.8L276.9 233.6L270.3 231.1L263.6 232.8L256.9 240.3L250.2 237.8L243.5 235.3L236.8 230.3L233.5 225.3L226.8 224.4L220.1 221.9L216.8 215.3L213.4 208.6L208.4 203.6L200.1 200.2L199.2 193.5L200.1 186.8Z" fill="#abb2be"/><path d="M302.0 173.5L307.0 171.8L308.7 180.2L313.7 186.8L320.4 186.8L327.1 185.2L332.1 188.5L327.1 195.2L330.4 200.2L335.4 203.6L332.9 210.2L327.1 210.2L320.4 211.9L312.0 215.3L303.7 216.9L297.0 220.3L290.3 224.4L287.0 223.6L287.0 218.6L289.5 213.6L287.0 208.6L283.6 201.9L281.9 197.7L290.3 189.4L297.0 181.8Z" fill="#98a3b3"/><path d="M290.3 226.9L290.3 224.4L297.0 220.3L303.7 216.9L312.0 215.3L320.4 211.9L327.1 210.2L326.2 223.6L323.7 230.3L317.0 235.3L310.4 239.5L302.0 239.5L295.3 238.6L291.1 233.6Z" fill="#9da7b6"/><path d="M326.8 190.6L334.6 196.1L343.5 192.8L350.2 191.7L354.6 200.6L365.8 206.2L374.7 210.6L384.7 212.8L391.4 220.6L393.6 226.2L385.8 229.6L381.4 232.9L372.5 229.6L365.8 232.9L361.3 240.7L358.0 247.4L359.1 256.3L354.6 260.7L346.8 258.5L342.4 249.6L340.2 238.5L337.9 227.3L334.6 224.0L327.9 222.9L325.7 222.9L325.7 211.7L332.4 209.5L335.7 201.7L327.9 198.4Z" fill="#929eb1"/><path d="M283.4 235.1L290.0 232.9L292.3 237.3L299.0 239.6L307.9 239.6L311.2 235.1L317.9 237.3L322.3 231.8L325.7 222.9L334.6 224.0L337.9 227.3L340.2 238.5L342.4 249.6L346.8 258.5L354.6 260.7L359.1 266.3L365.8 271.9L374.7 276.3L381.4 273.0L390.3 270.8L391.4 280.8L383.6 288.6L385.8 296.4L374.7 298.6L374.7 305.3L368.0 306.4L359.1 313.1L352.4 310.9L345.7 306.4L336.8 310.9L323.5 314.2L315.7 319.8L312.3 314.2L306.8 307.5L304.5 296.4L303.4 285.2L304.5 280.8L296.7 279.7L293.4 271.9L292.3 258.5L291.2 245.1L288.9 240.7Z" fill="#97a2b3"/><path d="M354.6 260.7L359.1 256.3L358.0 247.4L361.3 240.7L365.8 232.9L372.5 229.6L381.4 232.9L385.8 229.6L393.6 226.2L399.2 229.6L399.2 240.7L398.1 249.6L402.5 256.3L401.4 264.1L390.3 270.8L381.4 273.0L374.7 276.3L365.8 271.9L359.1 266.3Z" fill="#8a97ab"/><path d="M401.4 264.1L402.5 256.3L401.4 254.1L410.3 256.3L417.0 260.7L425.9 267.4L429.3 274.1L431.5 283.0L436.0 290.8L439.3 298.6L438.2 306.4L446.0 312.0L430.4 314.2L417.0 314.2L412.6 312.0L399.2 313.1L398.1 309.7L390.3 306.4L374.7 305.3L374.7 298.6L385.8 296.4L383.6 288.6L391.4 280.8L390.3 270.8Z" fill="#929eb1"/><path d="M384.7 212.8L391.4 207.3L397.0 200.6L405.9 202.8L417.0 203.9L423.7 209.5L428.2 218.4L434.8 221.8L436.0 231.8L425.9 235.1L414.8 236.2L405.9 238.5L399.2 240.7L399.2 229.6L393.6 226.2L391.4 220.6Z" fill="#9da7b6"/><path d="M436.0 216.2L443.7 211.7L452.7 209.5L456.0 202.8L451.5 196.1L454.9 191.7L461.6 191.7L468.2 195.0L472.7 202.8L482.7 207.3L481.6 216.2L477.2 225.1L470.5 230.7L459.3 234.0L448.2 229.6L439.3 226.2L436.0 231.8L434.8 221.8Z" fill="#a5aebb"/><path d="M482.7 207.3L492.8 214.0L501.7 217.3L509.5 219.5L508.3 227.3L501.7 234.0L497.2 240.7L495.0 248.5L487.2 248.5L479.4 244.0L473.8 240.7L474.9 232.9L470.5 230.7L477.2 225.1L481.6 216.2Z" fill="#abb3bf"/><path d="M509.5 219.5L530.6 218.4L532.8 226.2L531.7 236.2L529.5 242.9L530.6 251.8L529.5 259.6L526.2 261.8L499.4 261.8L496.1 260.7L497.2 254.1L495.0 248.5L497.2 240.7L501.7 234.0L508.3 227.3Z" fill="#98a3b3"/><path d="M425.9 235.1L436.0 231.8L439.3 226.2L448.2 229.6L459.3 234.0L470.5 230.7L474.9 232.9L473.8 240.7L479.4 244.0L487.2 248.5L495.0 248.5L497.2 254.1L496.1 260.7L489.4 266.3L481.6 263.0L472.7 261.8L466.0 267.4L459.3 268.5L450.4 265.2L443.7 263.0L439.3 256.3L440.4 247.4L434.8 242.9L428.2 239.6Z" fill="#a3acba"/><path d="M399.2 240.7L405.9 238.5L414.8 236.2L425.9 235.1L428.2 239.6L434.8 242.9L440.4 247.4L439.3 256.3L443.7 263.0L450.4 265.2L459.3 268.5L466.0 267.4L472.7 261.8L481.6 263.0L489.4 266.3L488.3 274.1L477.2 274.1L466.0 276.3L459.3 280.8L450.4 285.2L443.7 283.0L439.3 287.5L436.0 290.8L431.5 283.0L429.3 274.1L425.9 267.4L417.0 260.7L410.3 256.3L401.4 254.1L398.1 249.6Z" fill="#9da7b6"/><path d="M450.4 285.2L459.3 280.8L466.0 276.3L477.2 274.1L488.3 274.1L487.2 285.2L486.1 300.8L481.6 308.6L474.9 306.4L469.4 300.8L468.2 294.1L459.3 291.9L452.7 289.7Z" fill="#929eb1"/><path d="M436.0 290.8L439.3 287.5L443.7 283.0L450.4 285.2L452.7 289.7L459.3 291.9L468.2 294.1L469.4 300.8L463.8 305.3L452.7 315.3L446.0 312.0L438.2 306.4L439.3 298.6Z" fill="#9da7b6"/><path d="M213.7 35.8L220.2 34.7L221.3 35.8L222.5 47.5L226.0 56.9L227.2 63.9L224.9 67.4L220.2 67.4L215.5 74.4L213.2 82.6L213.2 93.2L208.5 90.8L205.0 89.6L201.5 93.2L198.0 93.7L196.8 94.3L194.4 86.1L189.8 80.3L185.1 76.2L186.3 67.4L190.9 55.7L196.8 47.5L201.5 42.9L213.2 41.1Z" fill="#b4bbc6"/><path d="M221.3 35.8L227.2 37.0L229.5 41.7L241.2 40.5L255.3 41.1L263.5 44.0L265.8 56.9L262.3 65.1L257.6 70.9L252.9 79.1L248.2 85.0L247.1 87.3L243.6 89.6L240.1 89.6L236.5 85.0L231.9 79.1L227.2 73.3L224.9 67.4L227.2 63.9L226.0 56.9L222.5 47.5Z" fill="#c9ced5"/><path d="M176.3 79.1L185.1 76.2L189.8 80.3L194.4 86.1L196.8 94.3L195.6 100.2L192.1 104.9L185.1 104.9L183.3 99.0L180.4 92.0L177.5 85.0Z" fill="#a0a9b8"/><path d="M196.8 94.3L201.5 93.2L206.1 99.0L208.5 102.5L203.8 107.2L203.2 111.9L201.5 114.2L193.3 113.6L192.1 104.9L195.6 100.2Z" fill="#98a2b2"/><path d="M220.2 67.4L224.9 67.4L224.9 75.6L221.3 80.3L219.0 88.5L216.7 95.5L214.3 99.0L210.8 100.2L206.1 99.0L201.5 93.2L205.0 89.6L208.5 90.8L213.2 93.2L213.2 82.6L215.5 74.4Z" fill="#b0b7c3"/><path d="M224.9 67.4L227.2 73.3L231.9 79.1L236.5 85.0L234.2 88.5L234.2 99.0L233.0 104.9L226.0 104.9L220.2 100.2L216.7 95.5L219.0 88.5L221.3 80.3L224.9 75.6Z" fill="#a8b0bd"/><path d="M247.1 87.3L252.9 89.6L251.8 93.2L247.1 97.8L240.1 101.3L234.2 104.9L233.0 104.9L234.2 99.0L234.2 88.5L236.5 85.0L240.1 89.6L243.6 89.6Z" fill="#c3c8d0"/><path d="M252.9 89.6L251.8 93.2L258.8 96.7L264.0 100.2L264.0 106.0L261.1 110.7L259.9 116.5L252.9 117.7L243.6 118.9L240.1 115.4L236.5 109.5L234.2 104.9L240.1 101.3L247.1 97.8Z" fill="#a9b1be"/><path d="M206.1 99.0L210.8 100.2L214.3 99.0L216.7 95.5L220.2 100.2L226.0 104.9L233.0 104.9L234.2 104.9L236.5 109.5L240.1 115.4L243.6 118.9L240.1 122.4L231.9 123.6L226.0 127.1L223.7 122.4L220.2 120.1L215.5 120.1L213.2 116.5L208.5 115.4L203.2 111.9L203.8 107.2L208.5 102.5Z" fill="#9da6b5"/><path d="M208.5 102.5L215.5 106.0L224.9 111.9L236.5 118.9" fill="none"/><path d="M205.0 107.8L215.5 112.5L227.2 120.6" fill="none"/><ellipse cx="33.4" cy="285.7" rx="11" ry="2.6" fill="#8c99ad"/></g></svg>

<div id="bar"></div>
<div class="abs bl" style="left:341px">0%</div>
<div class="abs bl" style="right:725px">100%</div>
<div id="tip">34,52%</div>

<div id="card">
  <div class="h">ИЗЛЕЗНОСТ</div><div class="hs"></div>
  <svg class="abs" style="left:65px;top:88px" width="220" height="220" viewBox="0 0 220 220">
    <circle cx="110" cy="110" r="93.500" fill="none" stroke="#e3e4e6" stroke-width="9"/><circle cx="110" cy="110" r="97.300" fill="none" stroke="#d3d4d6" stroke-width="1.400"/>
    <circle cx="110" cy="110" r="93.500" fill="none" stroke="#2f86cd" stroke-width="9" stroke-dasharray="202.800 600" transform="rotate(-90 110 110)"/>
    <text x="94" y="134.500" text-anchor="middle" font-family="Liberation Sans, sans-serif" font-size="72" fill="#2f86cd" stroke="#2f86cd" stroke-width="2">34</text>
    <text x="141" y="96.500" font-family="Liberation Sans, sans-serif" font-size="15" fill="#555">,52</text>
    <text x="0" y="0" transform="translate(141.500 134) scale(1 1.28)" font-family="Liberation Sans, sans-serif" font-size="27.500" font-weight="bold" fill="#2f86cd" stroke="#2f86cd" stroke-width=".5">%</text>
  </svg>
  <div class="row" style="top:345px"><b>Вкупно избирачи</b><span>1.808.131</span></div>
  <div class="row" style="top:382px"><b>Обработени</b><span><i>(91,02%)</i>1.645.799</span></div>
  <div class="row" style="top:419px"><b>Гласале</b><span>568.110</span></div>
  <div class="row" style="top:470px;border:0"><b>Повеќе</b></div>
  <svg class="abs" style="left:309px;top:486px" width="14" height="10" viewBox="0 0 14 10"><path d="M2 2l5 5 5-5" fill="none" stroke="#2b2b2b" stroke-width="2"/></svg>
</div>

<svg class="abs" style="left:300px;top:754px" width="112" height="32" viewBox="0 0 112 32">
<text x="1.500" y="25" font-family="Liberation Sans, sans-serif" font-size="27" fill="#8f9398" textLength="55" lengthAdjust="spacingAndGlyphs">i<tspan fill="#3d6fb0">V</tspan>ote</text>
<rect x="56" y="13" width="52" height="13" rx="3" fill="#4a7fc4"/>
<text x="58" y="24" font-family="Liberation Sans, sans-serif" font-size="12.500" fill="#fff" textLength="48" lengthAdjust="spacingAndGlyphs">Demokra</text></svg>
<div class="abs ft" style="left:414px">Авторски права © 2019</div>
<div class="abs ft" id="iv" style="left:537px;color:#3a6299;letter-spacing:-.33px;-webkit-text-stroke:.35px #3a6299">ИВОТЕ д.о.о.</div>
<div class="abs ft" style="left:605.5px">Лиценцирано од Државна изборна комисија.</div>
<div class="sb" style="left:1178.5px;background:#4267b2"><svg class="abs" style="left:5px;top:4px" width="12" height="12" viewBox="0 0 12 12"><rect width="12" height="12" rx="1.500" fill="#fff"/><path d="M8.300 12V7.400h1.500l.25-1.800H8.300V4.500c0-.5.150-.85.870-.85h.93V2.050C9.940 2.030 9.400 2 8.750 2 7.400 2 6.500 2.800 6.500 4.300v1.300H5v1.800h1.500V12z" fill="#4267b2"/></svg><span class="abs" style="left:24px">Share</span></div>
<div class="sb" style="left:1241.5px;background:#2b90d9"><svg class="abs" style="left:5px;top:4px" width="14" height="12" viewBox="0 0 24 20"><path fill="#fff" d="M24 2.400a9.800 9.800 0 0 1-2.830.78A4.940 4.940 0 0 0 23.340.45a9.860 9.860 0 0 1-3.130 1.200 4.920 4.920 0 0 0-8.390 4.490A13.980 13.980 0 0 1 1.670 1a4.920 4.920 0 0 0 1.520 6.570 4.900 4.900 0 0 1-2.230-.61v.06a4.930 4.930 0 0 0 3.950 4.830 4.940 4.940 0 0 1-2.220.08 4.930 4.930 0 0 0 4.600 3.420A9.880 9.880 0 0 1 0 17.390 13.940 13.940 0 0 0 7.550 19.600c9.060 0 14.010-7.500 14.010-14.010 0-.21 0-.43-.02-.64A10 10 0 0 0 24 2.400z"/></svg><span class="abs" style="left:23.5px">Tweet</span></div>
</body>
</html>
